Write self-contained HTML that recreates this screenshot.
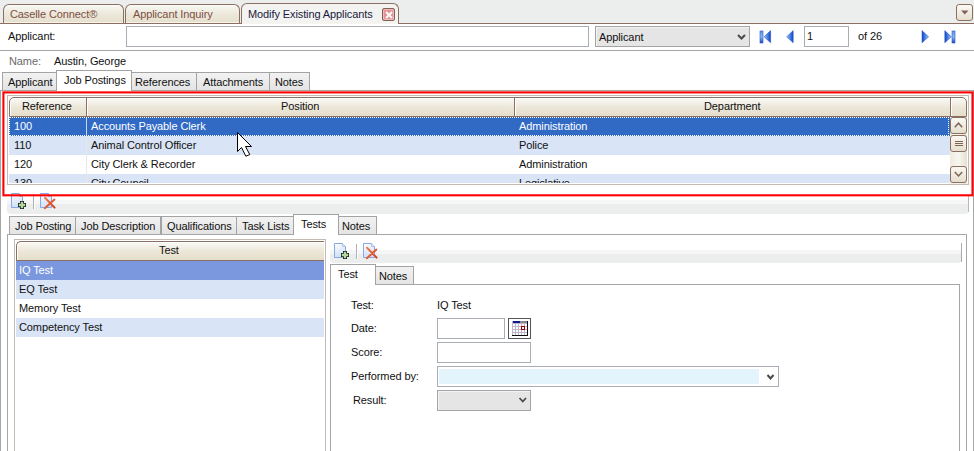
<!DOCTYPE html>
<html><head><meta charset="utf-8">
<style>
*{box-sizing:border-box;margin:0;padding:0}
html,body{width:974px;height:451px;overflow:hidden;background:#fff}
body{position:relative;font-family:"Liberation Sans",sans-serif;font-size:11px;color:#111;letter-spacing:-0.1px}
.a{position:absolute}
.t{position:absolute;white-space:nowrap;line-height:13px}
/* top tabs */
.topbar{left:0;top:0;width:974px;height:24px;background:#eceeed;border-bottom:1px solid #8b6f60}
.ttab{position:absolute;top:4px;height:19px;border:1px solid #8b6f60;border-bottom:none;border-radius:6px 6px 0 0;background:linear-gradient(#fdfdfb 0,#f5f4ee 2px,#ece8da 50%,#e5dfcd 100%);box-shadow:inset 0 -1px 0 #f7f5ee;color:#7d4f45}
.ttab.act{top:3px;height:21px;background:#f3f3f1;color:#1a1a40}
.close{left:382px;top:8px;width:13px;height:13px;border:1px solid #7f6355;border-radius:2px;background:#e39494;box-shadow:inset 0 0 0 1px #f2b9b9}
.ddbtn{left:956px;top:4px;width:17px;height:17px;border:1px solid #8b6f60;border-radius:3px;background:linear-gradient(#fbfaf6,#e6dfcf)}
.inp{position:absolute;border:1px solid #a9aeb6;background:#fff}
.sel{position:absolute;border:1px solid #a4a4a4;background:#e5e5e5;box-shadow:inset 1px 1px 0 #f3f3f3}
.hline{position:absolute;height:1px;background:#a6a6a6}
.vline{position:absolute;width:1px;background:#a6a6a6}
.tab{position:absolute;border:1px solid #a3a3a3;border-bottom:none;background:linear-gradient(#f2f2f2,#e4e4e4)}
.tab.act{background:#fff}

.hdr{border:1px solid #8b6f60;background:linear-gradient(#f9f8f4 0,#f3f1e8 25%,#ebe6d6 55%,#e5decd 100%);box-shadow:inset 1px 1px 0 #fff}
.hsep{width:1px;background:#8b6f60;box-shadow:1px 0 0 #fff}
.sbtn{border:1px solid #8b6f60;border-radius:3px;background:linear-gradient(#faf8f2,#e6dfcf)}
.tbar{border-radius:0 0 4px 4px}
</style></head><body>


<svg width="0" height="0" style="position:absolute">
<defs>
<linearGradient id="docg" x1="0" y1="0" x2="0.3" y2="1"><stop offset="0" stop-color="#ffffff"/><stop offset="1" stop-color="#cfe0f7"/></linearGradient>
<linearGradient id="xg" x1="0" y1="0" x2="1" y2="1"><stop offset="0" stop-color="#f08050"/><stop offset="1" stop-color="#d83818"/></linearGradient>
<symbol id="doc" viewBox="0 0 14 16"><path d="M0.5 0.5H8.5L11.5 3.5V14.5H0.5Z" fill="url(#docg)" stroke="#86a8e6" stroke-width="1"/><path d="M8.5 0.5V3.5H11.5" fill="#e8f0fb" stroke="#9ab8e8" stroke-width="0.8"/></symbol>
<symbol id="plus" viewBox="0 0 8 8"><path d="M2 0H6V2H8V6H6V8H2V6H0V2H2Z" fill="#141c14"/><path d="M2.8 0.8H5.2V2.8H7.2V5.2H5.2V7.2H2.8V5.2H0.8V2.8H2.8Z" fill="#b3d9a0"/></symbol>
<symbol id="xx" viewBox="0 0 14 14"><path d="M2 1.8L11.6 11.6M11.4 3.6L1.8 12.2" stroke="url(#xg)" stroke-width="2" stroke-linecap="round"/></symbol>
</defs></svg>
<!-- top tab strip -->
<div class="a topbar"></div>
<div class="ttab" style="left:3px;width:121px"><span class="t" style="left:6px;top:3px">Caselle Connect®</span></div>
<div class="ttab" style="left:125px;width:115px"><span class="t" style="left:7px;top:3px">Applicant Inquiry</span></div>
<div class="ttab act" style="left:241px;width:158px"><span class="t" style="left:6px;top:4px">Modify Existing Applicants</span></div>
<div class="a close"><svg width="11" height="11" style="position:absolute;left:0;top:0"><path d="M3 3L9 9M9 3L3 9" stroke="#fff" stroke-width="1.8"/></svg></div>
<div class="a ddbtn"><svg width="15" height="15" style="position:absolute;left:0;top:0"><path d="M4 5.5h7.5L7.75 9.5z" fill="#7d6456"/></svg></div>

<!-- applicant row -->
<span class="t" style="left:8px;top:30px">Applicant:</span>
<div class="inp" style="left:126px;top:26px;width:463px;height:21px"></div>
<div class="sel" style="left:595px;top:26px;width:155px;height:21px"><span class="t" style="left:3px;top:4px">Applicant</span></div>
<div class="inp" style="left:804px;top:26px;width:45px;height:21px"><span class="t" style="left:2px;top:3px">1</span></div>
<span class="t" style="left:858px;top:30px">of 26</span>
<div class="hline" style="left:0;top:50px;width:974px"></div>
<svg class="a" style="left:0;top:0" width="974" height="60">
<defs>
<linearGradient id="gl" x1="0" y1="0" x2="1" y2="0"><stop offset="0" stop-color="#9cc8f6"/><stop offset="0.6" stop-color="#3e7ae0"/><stop offset="1" stop-color="#1540c0"/></linearGradient>
<linearGradient id="gr" x1="1" y1="0" x2="0" y2="0"><stop offset="0" stop-color="#9cc8f6"/><stop offset="0.6" stop-color="#3e7ae0"/><stop offset="1" stop-color="#1540c0"/></linearGradient>
<linearGradient id="gb" x1="0" y1="0" x2="0" y2="1"><stop offset="0" stop-color="#5e9ae8"/><stop offset="0.5" stop-color="#8ab8f0"/><stop offset="1" stop-color="#1a48c0"/></linearGradient>
</defs>
<rect x="760" y="31" width="3" height="12" fill="url(#gb)" stroke="#2a58c8" stroke-width="0.6"/>
<path d="M764 36.8 L770.6 30.6 L770.6 42.8 Z" fill="url(#gl)" stroke="#2350c8" stroke-width="0.5"/>
<path d="M786.6 36.8 L793.2 30.6 L793.2 42.8 Z" fill="url(#gl)" stroke="#2350c8" stroke-width="0.5"/>
<path d="M928.6 36.8 L922 30.6 L922 42.8 Z" fill="url(#gr)" stroke="#2350c8" stroke-width="0.5"/>
<path d="M951.4 36.8 L944.8 30.6 L944.8 42.8 Z" fill="url(#gr)" stroke="#2350c8" stroke-width="0.5"/>
<rect x="952" y="31" width="3" height="12" fill="url(#gb)" stroke="#2a58c8" stroke-width="0.6"/>
<path d="M738 35 L741.5 38.5 L745 35" stroke="#4a4a4a" stroke-width="2" fill="none"/>
</svg>


<!-- name -->
<span class="t" style="left:9px;top:55px;color:#6a6a6a">Name:</span>
<span class="t" style="left:54px;top:55px">Austin, George</span>

<!-- tabs -->
<div class="hline" style="left:0;top:90px;width:974px"></div>
<div class="vline" style="left:0;top:90px;height:361px"></div>
<div class="vline" style="left:973px;top:90px;height:361px"></div>
<div class="tab" style="left:2px;top:72px;width:55px;height:18px"><span class="t" style="left:5px;top:3px">Applicant</span></div>
<div class="tab act" style="left:56px;top:70px;width:76px;height:21px"><span class="t" style="left:7px;top:3px">Job Postings</span></div>
<div class="tab" style="left:131px;top:72px;width:66px;height:18px"><span class="t" style="left:3px;top:3px">References</span></div>
<div class="tab" style="left:196px;top:72px;width:74px;height:18px"><span class="t" style="left:6px;top:3px">Attachments</span></div>
<div class="tab" style="left:269px;top:72px;width:41px;height:18px"><span class="t" style="left:5px;top:3px">Notes</span></div>

<!-- red box -->



<!-- main grid -->
<div class="a" style="left:7px;top:95px;width:962px;height:90px;border:1px solid #c4bab2;background:#fff"></div>
<div class="a hdr" style="left:9px;top:97px;width:958px;height:20px;border-radius:5px 5px 0 0"></div>
<div class="a hsep" style="left:86px;top:98px;height:18px"></div>
<div class="a hsep" style="left:514px;top:98px;height:18px"></div>
<div class="a hsep" style="left:950px;top:98px;height:18px"></div>
<span class="t" style="left:22px;top:100px">Reference</span>
<span class="t" style="left:281px;top:100px">Position</span>
<span class="t" style="left:704px;top:100px">Department</span>

<div class="a" style="left:9px;top:117px;width:941px;height:19px;background:#316ac5"></div>
<div class="a" style="left:9px;top:117px;width:940px;height:19px;border:1px dotted #fff"></div>
<div class="a" style="left:86px;top:118px;width:1px;height:17px;background:#c9d6ee"></div>
<span class="t" style="left:14px;top:120px;color:#fff">100</span>
<span class="t" style="left:91px;top:120px;color:#fff">Accounts Payable Clerk</span>
<span class="t" style="left:519px;top:120px;color:#fff">Administration</span>

<div class="a" style="left:9px;top:136px;width:941px;height:19px;background:#d9e4f6"></div>
<div class="a" style="left:86px;top:136px;width:1px;height:19px;background:#ece9e4"></div>
<span class="t" style="left:14px;top:139px">110</span>
<span class="t" style="left:91px;top:139px">Animal Control Officer</span>
<span class="t" style="left:519px;top:139px">Police</span>

<div class="a" style="left:86px;top:155px;width:1px;height:19px;background:#ece9e4"></div>
<span class="t" style="left:14px;top:158px">120</span>
<span class="t" style="left:91px;top:158px">City Clerk &amp; Recorder</span>
<span class="t" style="left:519px;top:158px">Administration</span>

<div class="a" style="left:9px;top:174px;width:941px;height:9px;background:#d9e4f6;overflow:hidden">
  <span class="t" style="left:5px;top:3px">130</span>
  <span class="t" style="left:82px;top:3px">City Council</span>
  <span class="t" style="left:510px;top:3px">Legislative</span>
</div>
<div class="a" style="left:86px;top:174px;width:1px;height:9px;background:#ece9e4"></div>

<!-- scrollbar -->
<div class="a" style="left:950px;top:117px;width:17px;height:67px;background:linear-gradient(90deg,#efebe0,#f8f6f0 50%,#e6e0d0)"></div>
<div class="a sbtn" style="left:950px;top:117px;width:17px;height:17px"><svg width="15" height="15" style="position:absolute;left:0;top:0"><path d="M3.8 9.2 L7.5 5.2 L11.2 9.2" stroke="#7d6456" stroke-width="1.5" fill="none"/></svg></div>
<div class="a sbtn" style="left:950px;top:135px;width:17px;height:17px"><svg width="15" height="15" style="position:absolute;left:0;top:0"><path d="M4 5.5h8M4 7.5h8M4 9.5h8" stroke="#7d6456" stroke-width="1" fill="none"/></svg></div>
<div class="a sbtn" style="left:950px;top:166px;width:17px;height:17px"><svg width="15" height="15" style="position:absolute;left:0;top:0"><path d="M3.8 5 L7.5 9 L11.2 5" stroke="#7d6456" stroke-width="1.5" fill="none"/></svg></div>
<!-- toolbar 1 -->
<div class="a tbar" style="left:7px;top:196px;width:962px;height:18px;background:linear-gradient(#fff 0,#fff 4px,#f5f6f5 4px,#f5f6f5 8px,#eceeed 8px)"></div>
<div class="a" style="left:968px;top:196px;width:1px;height:16px;background:#b8b8c0"></div>
<div class="a" style="left:0;top:196px;width:1px;height:255px;background:#a6a6a6"></div>


<svg class="a" style="left:11px;top:193px" width="14" height="16"><use href="#doc"/></svg>
<svg class="a" style="left:18px;top:201px" width="8" height="8"><use href="#plus"/></svg>
<div class="a" style="left:33px;top:194px;width:1px;height:15px;background:#b0b0bc;box-shadow:1px 0 0 #fff"></div>
<svg class="a" style="left:40px;top:193px" width="14" height="16"><use href="#doc"/></svg>
<svg class="a" style="left:43px;top:196px" width="14" height="14"><use href="#xx"/></svg>
<!-- subtabs -->
<div class="hline" style="left:7px;top:234px;width:960px"></div>
<div class="vline" style="left:7px;top:234px;height:217px"></div>
<div class="vline" style="left:966px;top:234px;height:217px"></div>
<div class="tab" style="left:9px;top:216px;width:67px;height:18px"><span class="t" style="left:5px;top:3px">Job Posting</span></div>
<div class="tab" style="left:75px;top:216px;width:86px;height:18px"><span class="t" style="left:5px;top:3px">Job Description</span></div>
<div class="tab" style="left:161px;top:216px;width:76px;height:18px"><span class="t" style="left:5px;top:3px">Qualifications</span></div>
<div class="tab" style="left:236px;top:216px;width:58px;height:18px"><span class="t" style="left:5px;top:3px">Task Lists</span></div>
<div class="tab act" style="left:293px;top:214px;width:46px;height:21px"><span class="t" style="left:7px;top:3px">Tests</span></div>
<div class="tab" style="left:338px;top:216px;width:39px;height:18px"><span class="t" style="left:3px;top:3px">Notes</span></div>

<!-- test grid -->
<div class="a" style="left:14px;top:239px;width:312px;height:220px;border:1px solid #c4bab2;background:#fff"></div>
<div class="a hdr" style="left:16px;top:241px;width:308px;height:20px;border-radius:5px 0 0 0;border-right:none"></div>
<span class="t" style="left:159px;top:244px">Test</span>
<div class="a" style="left:16px;top:261px;width:308px;height:19px;background:#7b98df"></div>
<span class="t" style="left:19px;top:264px;color:#fff">IQ Test</span>
<div class="a" style="left:16px;top:280px;width:308px;height:19px;background:#d9e4f6"></div>
<span class="t" style="left:19px;top:283px">EQ Test</span>
<span class="t" style="left:19px;top:302px">Memory Test</span>
<div class="a" style="left:16px;top:318px;width:308px;height:19px;background:#d9e4f6"></div>
<span class="t" style="left:19px;top:321px">Competency Test</span>

<!-- right panel -->
<div class="a tbar" style="left:330px;top:242px;width:632px;height:21px;background:linear-gradient(#fff 0,#fff 8px,#f5f6f5 8px,#f5f6f5 12px,#eceeed 12px)"></div>

<svg class="a" style="left:334px;top:243px" width="14" height="16"><use href="#doc"/></svg>
<svg class="a" style="left:341px;top:251px" width="8" height="8"><use href="#plus"/></svg>
<div class="a" style="left:356px;top:244px;width:1px;height:15px;background:#b0b0bc;box-shadow:1px 0 0 #fff"></div>
<svg class="a" style="left:363px;top:243px" width="14" height="16"><use href="#doc"/></svg>
<svg class="a" style="left:365px;top:246px" width="14" height="14"><use href="#xx"/></svg>
<div class="a" style="left:961px;top:243px;width:1px;height:19px;background:#a8a8b4"></div><div class="hline" style="left:330px;top:284px;width:630px"></div>
<div class="vline" style="left:330px;top:264px;height:187px"></div>
<div class="vline" style="left:959px;top:284px;height:167px"></div>
<div class="tab act" style="left:330px;top:264px;width:46px;height:21px"><span class="t" style="left:7px;top:3px">Test</span></div>
<div class="tab" style="left:375px;top:266px;width:39px;height:18px"><span class="t" style="left:3px;top:3px">Notes</span></div>

<span class="t" style="left:351px;top:299px">Test:</span>
<span class="t" style="left:437px;top:299px">IQ Test</span>
<span class="t" style="left:351px;top:322px">Date:</span>
<div class="inp" style="left:437px;top:318px;width:68px;height:21px"></div>

<span class="t" style="left:351px;top:346px">Score:</span>
<div class="inp" style="left:437px;top:342px;width:94px;height:21px"></div>
<span class="t" style="left:351px;top:370px">Performed by:</span>
<div class="inp" style="left:437px;top:366px;width:342px;height:21px"></div>
<div class="a" style="left:439px;top:369px;width:320px;height:15px;background:#e3f4fc"></div>
<span class="t" style="left:353px;top:394px">Result:</span>
<div class="sel" style="left:437px;top:390px;width:94px;height:21px"></div>

<svg class="a" style="left:0;top:0" width="974" height="451">
<rect x="508.5" y="318.5" width="22" height="20" fill="#fff" stroke="#555" stroke-width="1"/>
<rect x="512" y="321" width="16" height="15" fill="#bdb6cc"/>
<rect x="513" y="321" width="7" height="2" fill="#0d1a8e"/><rect x="520" y="321" width="7" height="2" fill="#8a8a8a"/>
<rect x="513" y="324" width="2" height="2" fill="#fff"/><rect x="513" y="327" width="2" height="2" fill="#fff"/><rect x="513" y="330" width="2" height="2" fill="#fff"/><rect x="513" y="333" width="2" height="2" fill="#fff"/><rect x="516" y="324" width="2" height="2" fill="#fff"/><rect x="516" y="327" width="2" height="2" fill="#fff"/><rect x="516" y="330" width="2" height="2" fill="#fff"/><rect x="516" y="333" width="2" height="2" fill="#fff"/><rect x="519" y="324" width="2" height="2" fill="#fff"/><rect x="519" y="327" width="2" height="2" fill="#fff"/><rect x="519" y="330" width="2" height="2" fill="#fff"/><rect x="519" y="333" width="2" height="2" fill="#fff"/><rect x="522" y="324" width="2" height="2" fill="#fff"/><rect x="522" y="327" width="2" height="2" fill="#fff"/><rect x="522" y="330" width="2" height="2" fill="#fff"/><rect x="522" y="333" width="2" height="2" fill="#fff"/><rect x="525" y="324" width="2" height="2" fill="#fff"/><rect x="525" y="327" width="2" height="2" fill="#fff"/><rect x="525" y="330" width="2" height="2" fill="#fff"/><rect x="525" y="333" width="2" height="2" fill="#fff"/>
<rect x="521.5" y="326.5" width="3" height="3" fill="#fff" stroke="#a00000" stroke-width="1"/>
<rect x="527" y="321" width="1" height="15" fill="#111"/><rect x="512" y="335" width="16" height="1" fill="#111"/>
<path d="M767.5 375 L770.5 378.5 L773.5 375" stroke="#4a4a4a" stroke-width="2" fill="none"/>
<path d="M519.5 398 L522.8 401.5 L526 398" stroke="#4a4a4a" stroke-width="1.8" fill="none"/>
<path d="M237.5 132.5 L237.5 151.5 L241.5 147.5 L245.8 156.2 L249.8 154.6 L245.5 146.5 L251.5 146.5 Z" fill="#fff" stroke="#000" stroke-width="1" stroke-linejoin="miter"/>
</svg>
<svg class="a" style="left:0;top:0" width="974" height="451"><rect x="3.4" y="92.4" width="969.1" height="102.9" fill="none" stroke="#ff0000" stroke-width="2.1"/></svg>
</body></html>
